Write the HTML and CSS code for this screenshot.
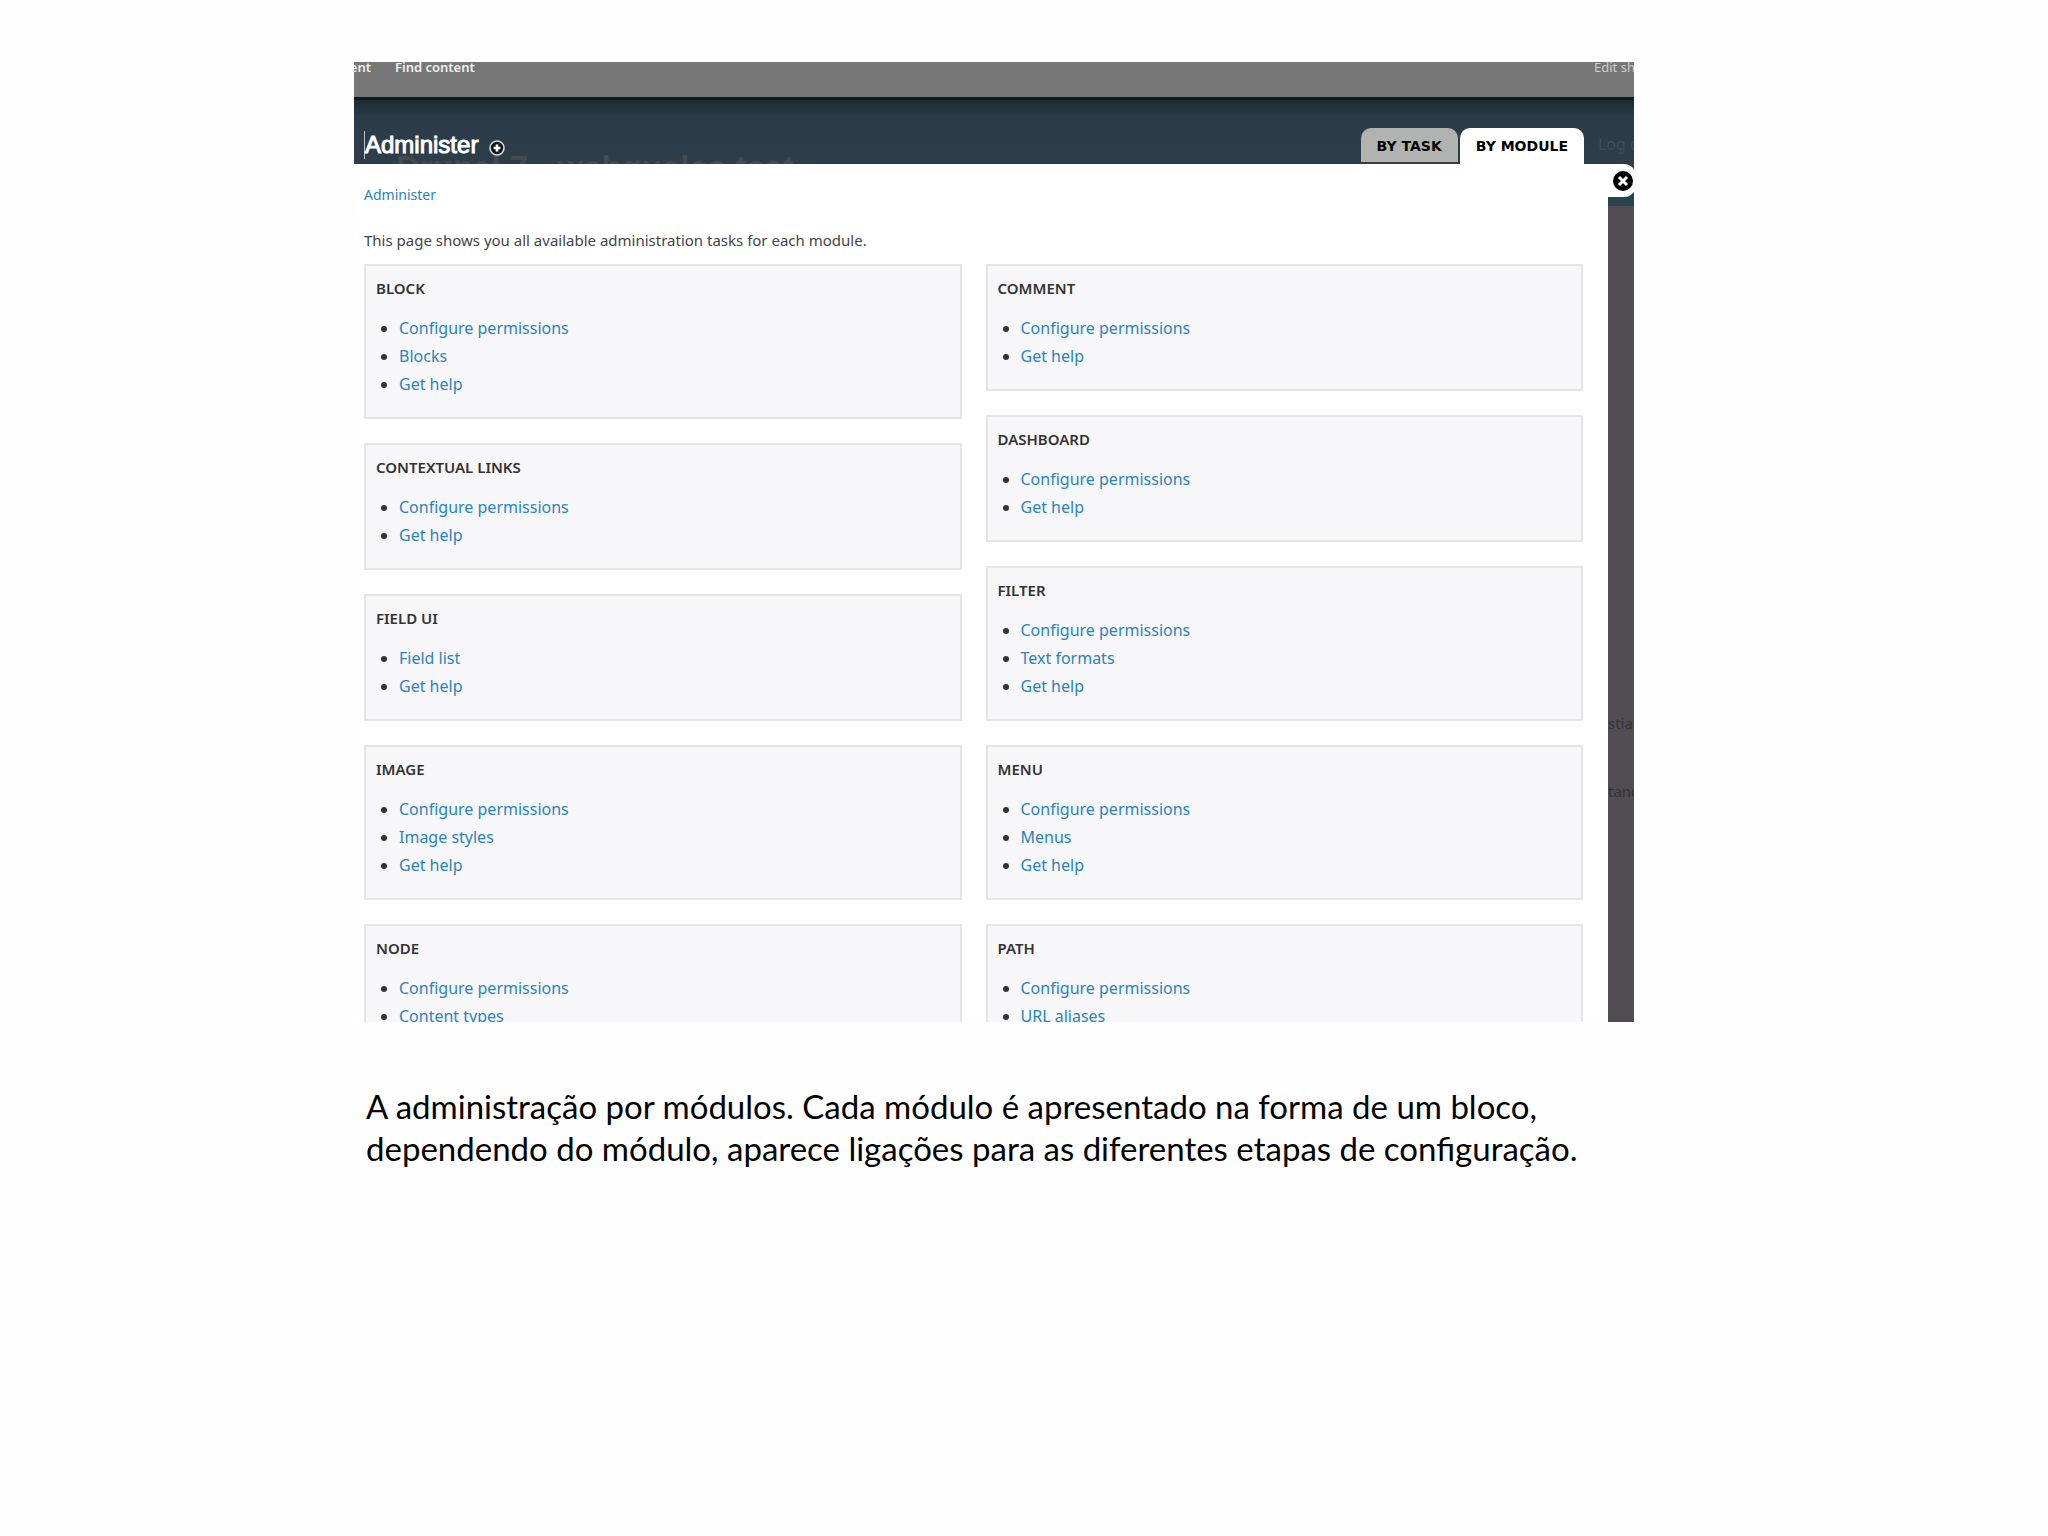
FILE: index.html
```
<!DOCTYPE html>
<html lang="pt">
<head>
  <meta charset="UTF-8" />
  <title>Administração por módulos</title>
  <link rel="stylesheet" href="styles.css">
</head>
<body>
  <main class="slide">
    <div class="screen" lang="en">
      <!-- Shortcut bar -->
      <nav class="shortcuts">
        <div class="shortcut-links">
          <a href="#" class="cut-left">ent</a>
          <a href="#">Find content</a>
        </div>
        <a href="#" class="edit-link">Edit sh</a>
      </nav>

      <!-- Overlay title and tabs -->
      <header class="overlay-header">
        <span class="ghost site-name">Drupal 7 - webquales test</span>
        <div class="title">
          <h1>Administer</h1>
          <button class="add-shortcut" aria-label="Add to shortcuts">
            <svg width="18" height="18" viewBox="0 0 18 18">
              <circle cx="9" cy="9" r="7" fill="#10181c" stroke="#d5d9db" stroke-width="1.6"/>
              <path d="M9 5.6v6.8M5.6 9h6.8" stroke="#fff" stroke-width="2.6"/>
            </svg>
          </button>
        </div>
        <nav class="tabs">
          <a href="#" class="tab">BY TASK</a>
          <a href="#" class="tab active">BY MODULE</a>
        </nav>
        <span class="ghost log-out">Log out</span>
      </header>

      <div class="overlay-body">
        <div class="content">
          <a href="#" class="breadcrumb">Administer</a>
          <p class="intro">This page shows you all available administration tasks for each module.</p>

          <div class="columns">
            <div class="column">
              <section class="panel">
                <h2>BLOCK</h2>
                <ul>
                  <li><a href="#">Configure permissions</a></li>
                  <li><a href="#">Blocks</a></li>
                  <li><a href="#">Get help</a></li>
                </ul>
              </section>
              <section class="panel">
                <h2>CONTEXTUAL LINKS</h2>
                <ul>
                  <li><a href="#">Configure permissions</a></li>
                  <li><a href="#">Get help</a></li>
                </ul>
              </section>
              <section class="panel">
                <h2>FIELD UI</h2>
                <ul>
                  <li><a href="#">Field list</a></li>
                  <li><a href="#">Get help</a></li>
                </ul>
              </section>
              <section class="panel">
                <h2>IMAGE</h2>
                <ul>
                  <li><a href="#">Configure permissions</a></li>
                  <li><a href="#">Image styles</a></li>
                  <li><a href="#">Get help</a></li>
                </ul>
              </section>
              <section class="panel">
                <h2>NODE</h2>
                <ul>
                  <li><a href="#">Configure permissions</a></li>
                  <li><a href="#">Content types</a></li>
                </ul>
              </section>
            </div>

            <div class="column">
              <section class="panel">
                <h2>COMMENT</h2>
                <ul>
                  <li><a href="#">Configure permissions</a></li>
                  <li><a href="#">Get help</a></li>
                </ul>
              </section>
              <section class="panel">
                <h2>DASHBOARD</h2>
                <ul>
                  <li><a href="#">Configure permissions</a></li>
                  <li><a href="#">Get help</a></li>
                </ul>
              </section>
              <section class="panel">
                <h2>FILTER</h2>
                <ul>
                  <li><a href="#">Configure permissions</a></li>
                  <li><a href="#">Text formats</a></li>
                  <li><a href="#">Get help</a></li>
                </ul>
              </section>
              <section class="panel">
                <h2>MENU</h2>
                <ul>
                  <li><a href="#">Configure permissions</a></li>
                  <li><a href="#">Menus</a></li>
                  <li><a href="#">Get help</a></li>
                </ul>
              </section>
              <section class="panel">
                <h2>PATH</h2>
                <ul>
                  <li><a href="#">Configure permissions</a></li>
                  <li><a href="#">URL aliases</a></li>
                </ul>
              </section>
            </div>
          </div>
        </div>

        <!-- Dimmed page behind the overlay -->
        <aside class="backdrop">
          <div class="backdrop-top">
            <button class="close" aria-label="Close overlay">
              <svg width="20" height="20" viewBox="0 0 20 20">
                <circle cx="10" cy="10" r="10" fill="#000"/>
                <path d="M6 6l8 8M14 6l-8 8" stroke="#fff" stroke-width="3"/>
              </svg>
            </button>
          </div>
          <span class="ghost author">stian</span>
          <span class="ghost tag">tand</span>
        </aside>
      </div>
    </div>

    <p class="caption">A administração por módulos. Cada módulo é apresentado na forma de um bloco, dependendo do módulo, aparece ligações para as diferentes etapas de configuração.</p>
  </main>
</body>
</html>
```
FILE: styles.css
```
* {
  box-sizing: border-box;
}

body {
  margin: 0;
  background: #fefefe;
  color: #333;
  font-family: "Noto Sans", "Open Sans", sans-serif;
  font-size: 16px;
}

a {
  color: #2a84bd;
  text-decoration: none;
}

button {
  padding: 0;
  border: none;
  background: none;
  cursor: pointer;
}

button svg {
  display: block;
}

.slide {
  padding: 62px 414px 62px 354px;
}

.screen {
  aspect-ratio: 4 / 3;
  overflow: hidden;
  display: flex;
  flex-direction: column;
  background: #fff;
}

/* Shortcut bar */
.shortcuts {
  flex: none;
  display: flex;
  justify-content: space-between;
  height: 38px;
  background: #777;
  border-bottom: 3px solid #10181b;
  font-size: 13px;
  font-weight: 600;
  line-height: 10px;
  white-space: nowrap;
  overflow: hidden;
}

.shortcuts a {
  color: #f0f0f0;
}

.shortcut-links {
  display: flex;
  gap: 24px;
}

.cut-left {
  width: 17px;
  display: flex;
  justify-content: flex-end;
}

.shortcuts .edit-link {
  width: 40px;
  color: #ccc;
  font-weight: 400;
}

/* Overlay header */
.overlay-header {
  flex: none;
  position: relative;
  display: flex;
  justify-content: space-between;
  align-items: flex-end;
  height: 64px;
  padding: 0 50px 0 10px;
  background: linear-gradient(#1b2c33, #2b3b47 16px, #2d3d49);
  overflow: hidden;
}

.title {
  display: flex;
  align-items: center;
  gap: 10px;
  padding-bottom: 5px;
  position: relative;
}

h1 {
  margin: 0;
  border-left: 1px solid #b9c1c6;
  color: #fff;
  font-family: "Liberation Sans", Arial, sans-serif;
  font-size: 24px;
  font-weight: 400;
  line-height: 28px;
  -webkit-text-stroke: 1px #fff;
}

.add-shortcut {
  margin-top: 6px;
}

.tabs {
  display: flex;
  align-items: flex-end;
  gap: 2px;
}

.tab {
  height: 36px;
  padding: 0 16px;
  border-radius: 10px 10px 0 0;
  border-bottom: 2px solid #3a3d3e;
  background: #b1b3b0;
  color: #000;
  font-family: "DejaVu Sans", Verdana, sans-serif;
  font-size: 14px;
  font-weight: 700;
  line-height: 36px;
}

.tab.active {
  border-bottom-color: #fff;
  background: #fff;
}

.ghost {
  position: absolute;
  white-space: nowrap;
}

.site-name {
  left: 42px;
  top: 50px;
  color: #454a50;
  font-family: "Liberation Sans", Arial, sans-serif;
  font-size: 33px;
  font-weight: 700;
  line-height: 36px;
}

.log-out {
  left: calc(100% - 36px);
  top: 34px;
  color: #3d4d59;
  line-height: 20px;
}

/* Overlay body */
.overlay-body {
  flex: 1;
  min-height: 0;
  display: flex;
}

.content {
  flex: 1;
  padding: 20px 25px 0 10px;
}

.breadcrumb {
  display: block;
  font-size: 14px;
  line-height: 22px;
}

.intro {
  margin: 23px 0 13px;
  color: #444;
  font-size: 15px;
  line-height: 22px;
}

.columns {
  display: grid;
  grid-template-columns: 1fr 1fr;
  gap: 24px;
}

.column {
  display: flex;
  flex-direction: column;
  gap: 24px;
}

.panel {
  padding: 8px 10px 19px;
  border: 2px solid #e5e4e7;
  background: #f7f6f9;
}

.panel h2 {
  margin: 0 0 12px;
  font-size: 15px;
  font-weight: 600;
  line-height: 28px;
}

.panel ul {
  margin: 0;
  padding-left: 23px;
}

.panel li {
  line-height: 28px;
}

/* Dimmed page strip */
.backdrop {
  flex: none;
  position: relative;
  width: 26px;
  overflow: hidden;
  background: #504e51;
}

.backdrop-top {
  height: 42px;
  background: #2a414e;
}

.close {
  display: block;
  width: 28px;
  height: 33px;
  padding-left: 5px;
  border-radius: 0 12px 12px 0;
  background: #fff;
}

.author,
.tag {
  left: 0;
  color: #343335;
  font-size: 15px;
  line-height: 20px;
}

.author {
  top: 549px;
}

.tag {
  top: 617px;
}

/* Caption under the screen */
.caption {
  margin: 63px 0 0;
  padding: 0 12px;
  color: #000;
  font-family: Lato, sans-serif;
  font-size: 33px;
  line-height: 42px;
}
```
